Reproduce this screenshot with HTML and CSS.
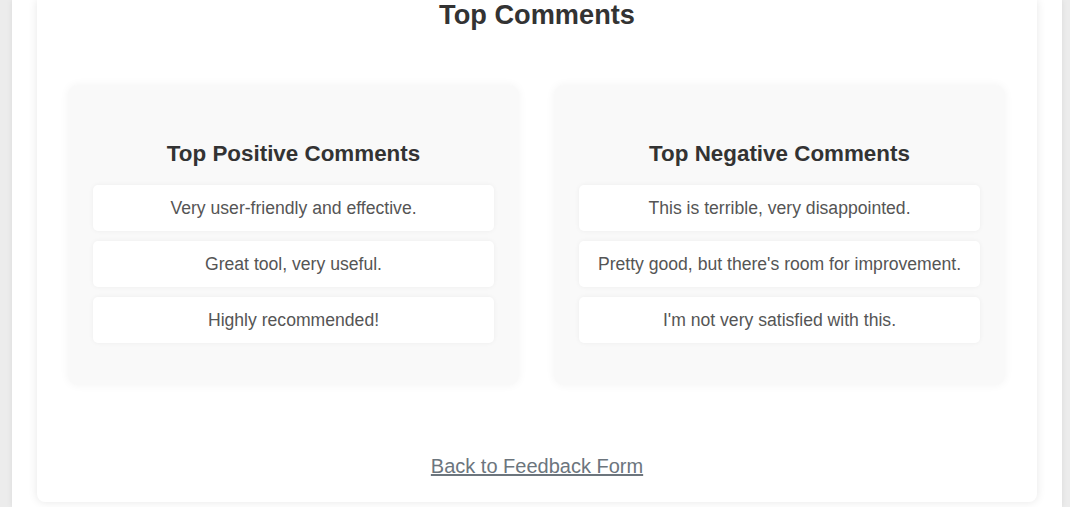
FILE: index.html
```html
<!DOCTYPE html>
<html>
<head>
<meta charset="utf-8">
<link rel="stylesheet" href="styles.css">
</head>
<body>
<div class="page">
  <div class="card">
    <h1 class="title">Top Comments</h1>
    <div class="panels">
      <section class="panel">
        <h2 class="panel-title">Top Positive Comments</h2>
        <ul class="list">
          <li class="item">Very user-friendly and effective.</li>
          <li class="item">Great tool, very useful.</li>
          <li class="item">Highly recommended!</li>
        </ul>
      </section>
      <section class="panel">
        <h2 class="panel-title">Top Negative Comments</h2>
        <ul class="list">
          <li class="item">This is terrible, very disappointed.</li>
          <li class="item">Pretty good, but there's room for improvement.</li>
          <li class="item">I'm not very satisfied with this.</li>
        </ul>
      </section>
    </div>
    <div class="back"><a class="back-link" href="#">Back to Feedback Form</a></div>
  </div>
</div>
</body>
</html>
```
FILE: styles.css
```css
html, body {
  margin: 0;
  padding: 0;
}
body {
  background: #ececec;
  font-family: "Liberation Sans", Arial, sans-serif;
  overflow: hidden;
}
.page {
  margin: 0 8px 0 12px;
  background: #ffffff;
  padding: 0 25px 5px 25px;
  height: 502px;
  box-shadow: 0 0 6px rgba(0, 0, 0, 0.08);
}
.card {
  background: #ffffff;
  border-radius: 0 0 8px 8px;
  box-shadow: 0 0 10px rgba(0, 0, 0, 0.1);
  height: 502px;
  box-sizing: border-box;
}
.title {
  margin: 0;
  text-align: center;
  font-size: 27.2px;
  line-height: 30px;
  color: #333333;
}
.panels {
  display: flex;
  gap: 35px;
  padding: 55px 32px 0 31px;
}
.panel {
  flex: 1;
  background: #f9f9f9;
  border-radius: 10px;
  box-shadow: 0 0 10px rgba(0, 0, 0, 0.05);
  padding: 56px 25px 42px 25px;
}
.panel-title {
  margin: 0 0 18px 0;
  text-align: center;
  font-size: 22.4px;
  line-height: 26px;
  color: #333333;
}
.list {
  list-style: none;
  margin: 0;
  padding: 0;
  display: flex;
  flex-direction: column;
  gap: 10px;
}
.item {
  background: #ffffff;
  border-radius: 5px;
  box-shadow: 0 0 5px rgba(0, 0, 0, 0.05);
  padding: 13px 10px;
  text-align: center;
  font-size: 17.6px;
  line-height: 20px;
  color: #555555;
}
.back {
  text-align: center;
  padding-top: 69px;
}
.back-link {
  color: #6c757d;
  font-size: 20px;
  line-height: 24px;
  text-decoration: underline;
}
```
